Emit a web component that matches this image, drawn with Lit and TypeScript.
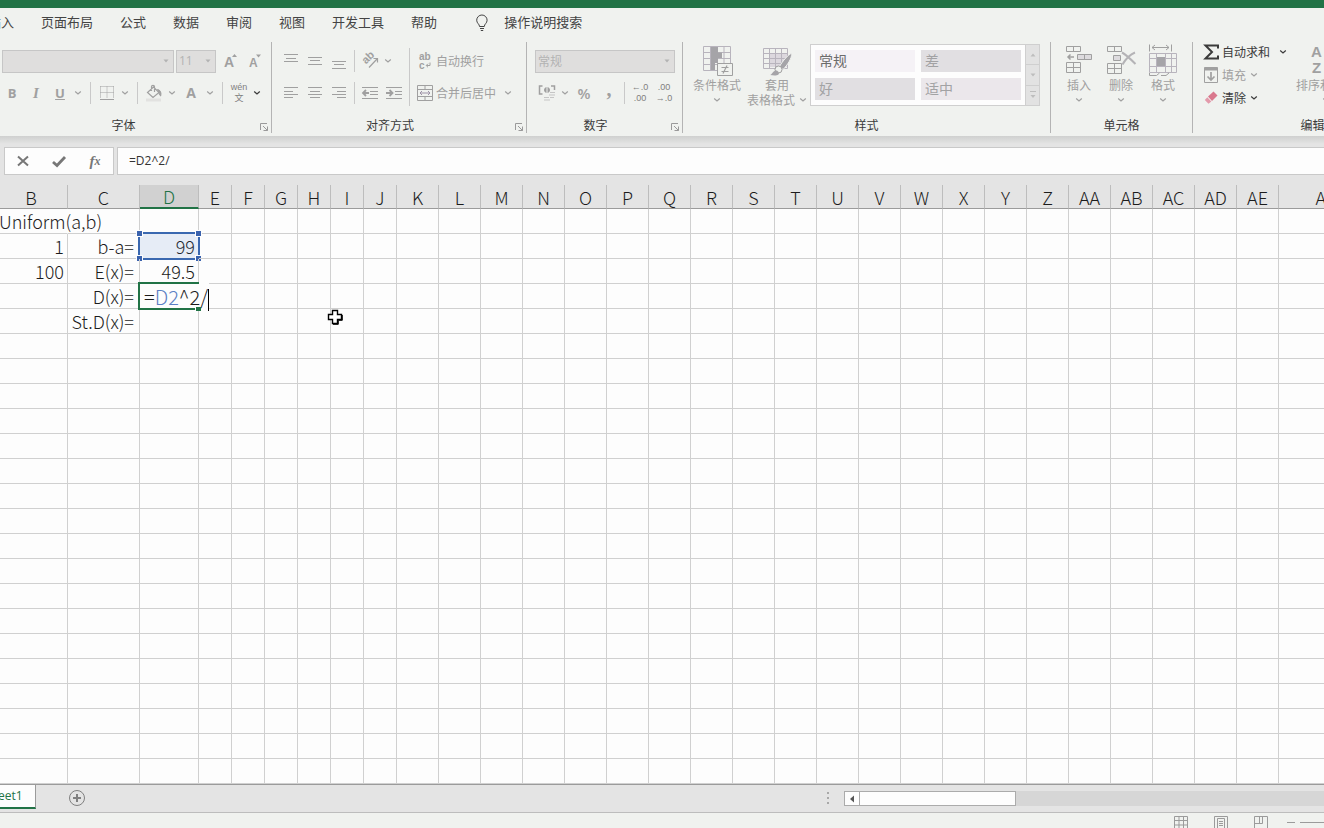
import { LitElement, html, svg, css, nothing } from "lit";
import { customElement, state } from "lit/decorators.js";
import { classMap } from "lit/directives/class-map.js";
import { styleMap } from "lit/directives/style-map.js";

const icon = (w: number, h: number, body: unknown) =>
  html`<svg width=${w} height=${h} viewBox="0 0 ${w} ${h}" fill="none" stroke="currentColor" aria-hidden="true">${body}</svg>`;

const chevron = () => icon(8, 6, svg`<path d="M1.2 1.5 4 4 6.800 1.500" stroke-width="1.200"/>`);
const arrow = () => icon(6, 4, svg`<path d="M0.500 0.500H5.500L3 3.500Z" fill="currentColor" stroke="none"/>`);

const lines = (rows: [number, number, number][]) =>
  icon(16, 18, rows.map(([x, y, w]) => svg`<path d="M${x} ${y}.5h${w}"/>`));

const ICONS = {
  bulb: icon(16, 18, svg`<path d="M5.500 12.500C5.500 10 2.700 9.300 2.700 6.200a5.200 5.200 0 0 1 10.400 0C13.100 9.300 10.300 10 10.300 12.500ZM6 14.500h4M6.800 16.500h2.400"/>`),
  growFont: icon(16, 16, svg`<text class="letter" x="2" y="14" font-size="14">A</text><path d="M10 4 12.500 1 15 4Z" fill="currentColor" stroke="none"/>`),
  shrinkFont: icon(16, 16, svg`<text class="letter" x="3" y="14" font-size="12">A</text><path d="M10 1.500h5L12.500 4.500Z" fill="currentColor" stroke="none"/>`),
  borders: icon(16, 16, svg`<path d="M1.500 1.500h13M1.500 1.500v12M14.500 1.500v12M8 1.500v12M1.500 7.500h13" stroke-dasharray="1 1"/><path d="M1 14.500h14"/>`),
  bucket: icon(18, 18, svg`<path d="M2.500 8.500 8.500 3 14 8.500 8 13.500ZM6.500 7V2.800a1.500 1.500 0 0 1 3 0V8" stroke-width="1.200"/><path d="M12.500 5.500c3 .5 4 3 3.200 6.500-1.500-1-1.700-2.500-1.400-3.500Z" fill="currentColor"/><path d="M1 16h15" stroke="#e2e2e0" stroke-width="3"/>`),
  top: lines([[1, 2, 14], [3, 6, 10], [1, 9, 14]]),
  middle: lines([[1, 5, 14], [3, 8, 10], [1, 12, 14]]),
  bottom: lines([[1, 9, 14], [3, 12, 10], [1, 16, 14]]),
  left: lines([[1, 3, 14], [1, 7, 9], [1, 10, 14], [1, 13, 9]]),
  center: lines([[1, 3, 14], [3, 7, 10], [1, 10, 14], [3, 13, 10]]),
  right: lines([[1, 3, 14], [6, 7, 9], [1, 10, 14], [6, 13, 9]]),
  orientation: icon(18, 18, svg`<text class="letter" x="0" y="0" font-size="11" transform="translate(5 12.500) rotate(-45)">ab</text><path d="M8 15.500 16 7M12.500 6.500h4v4" stroke-width="1.200"/>`),
  outdent: icon(18, 16, svg`<path d="M1 2.500h16M9 6.500h8M9 9.500h8M1 13.500h16"/><path d="M8 8H2.500M5 5 2 8l3 3" stroke-width="1.800"/>`),
  indent: icon(18, 16, svg`<path d="M1 2.500h16M10 6.500h7M10 9.500h7M1 13.500h16"/><path d="M1 8H7M4.500 5l3 3-3 3" stroke-width="1.800"/>`),
  wrap: icon(16, 18, svg`<text class="letter" x="2" y="8" font-size="10">ab</text><text class="letter" x="2" y="17" font-size="10">c</text><path d="M13 10.500v3H9.500M11 11.700 9.200 13.500 11 15.300"/>`),
  merge: icon(16, 16, svg`<path d="M.5.5h15v15H.5ZM.5 4.500h15M.5 11.500h15M8 .5v4M8 11.500v4"/><path d="M3 8h10M5 6 3 8l2 2M11 6l2 2-2 2" stroke="#9d92a6"/>`),
  currency: icon(18, 18, svg`<path d="M4.500 2H1.500v8h3M13 2h3.500v4" stroke-width="1.500"/><circle cx="9" cy="6" r="2.500" fill="currentColor"/><path d="M9 3v6" stroke="#f0f2ef"/><path d="M12 8.500h5M11 11h6M6 13.500h5M12 13.500h4M6 16h6" stroke="#c5c5c5"/>`),
  conditional: icon(32, 32, svg`<path d="M2.500 2.500h27v24h-27ZM2.500 8.500h27M2.500 14.500h27M2.500 20.500h27M9.500 2.500v24M16.500 2.500v24M23 2.500v24" stroke="#b8b4bd"/><path d="M10 3h7v5.500h4V14h-4v5h-3v7h-4Z" fill="#a5a4a8" stroke="none"/><path d="M16.500 19.500h15v12h-15Z" fill="#f0f2ef"/><path d="M20.500 23.500h7M20.500 27.500h7M26 21.500l-4 8" stroke-width="1.200"/>`),
  tableFormat: icon(32, 32, svg`<path d="M8 10h18v13H8Z" fill="#dcd8de" stroke="none"/><path d="M2.500 4.500h24v20h-24ZM2.500 9.500h24M2.500 14.500h24M2.500 19.500h24M8.500 4.500v20M14.500 4.500v20M20.500 4.500v20" stroke="#b8b4bd"/><path d="M31 9c-5 2.500-10 9-12.500 13.500l3.500 3c4.500-4.500 8.500-10.500 9-16.500Z" fill="#a5a4a8" stroke="#f0f2ef"/><circle cx="17.500" cy="25.500" r="3.500" fill="#f0f2ef"/><path d="M9 31c2.500-.5 3-4.500 6-4.500 1.500 0 4 2 2.500 4-2 1.500-5.500 1-8.500.5Z" fill="#a5a4a8" stroke="none"/>`),
  insert: icon(32, 32, svg`<path d="M3.500 2.500h14v5h-14ZM10.500 2.500v5M3.500 18.500h14v10h-14ZM10.500 18.500v10M3.500 23.500h14"/><path d="M14.500 10.500h14v5h-14ZM21.500 10.500v5" fill="#dddbde"/><path d="M11 13H5M7.500 10.500 5 13l2.500 2.500" stroke-width="1.500"/>`),
  remove: icon(32, 32, svg`<path d="M2.500 2.500h14v5h-14ZM9.500 2.500v5M2.500 19.500h14v10h-14ZM9.500 19.500v10M2.500 24.500h14"/><path d="M8.500 11.500h7v5h-7Z" fill="#dddbde"/><path d="M17 8.500c4 2 9 7 13.500 11.500M30 8.500c-5 2-9 6-12.500 12" stroke-width="2" stroke="#b4b3b6"/>`),
  format: icon(32, 32, svg`<path d="M2.500.5v7M24.500.5v7M5 3.500h17M8 1 5 3.500 8 6M19 1l3 2.500L19 6"/><path d="M2.500 9.500h27v19h-27ZM2.500 14.500h27M2.500 22.500h27M9.500 9.500v19M18.500 9.500v19M24.500 9.500v19" stroke="#b8b4bd"/><path d="M10 13h8v9h-8Z" fill="#a5a4a8" stroke="none"/><path d="M2.500 29v2.500h7l3-2.500M14 31.500h5l3-2.500"/>`),
  sigma: icon(16, 16, svg`<path d="M15 4.500V1.500H2.500L9 8l-6.500 6.500H15V11.500" stroke-width="2"/>`),
  fill: icon(16, 16, svg`<path d="M1.500.5h13v15h-13Z"/><path d="M1.500 2h13" stroke-width="3"/><path d="M8 5v8M4.500 9.500 8 13l3.500-3.500" stroke-width="1.700"/>`),
  eraser: icon(16, 16, svg`<g stroke="none"><path d="M5 6.500 10.500 1.500 14.500 5.500 9 11Z" fill="#d9788d"/><path d="M4.300 7.200 8.300 11.500 5.500 13.700 1.800 10Z" fill="#e39aab"/></g>`),
  sort: icon(32, 32, svg`<text class="letter" x="1" y="13" font-size="15">A</text><text class="letter" x="2" y="29" font-size="15">Z</text><path d="M14 9.500h6M16 15h10l-4 5v8" stroke-width="2"/>`),
  cancel: icon(16, 16, svg`<path d="M3 3.500 13 12.500M13 3.500 3 12.500" stroke-width="2"/>`),
  enter: icon(16, 16, svg`<path d="M2 9 6 12.500 14 4" stroke-width="2.800"/>`),
  launcher: icon(10, 10, svg`<path d="M1.500 8V1.500H8M4 4l4.500 4.500M8.500 4.500v4h-4"/>`),
  plus: icon(18, 18, svg`<circle cx="9" cy="9" r="7.500"/><path d="M9 5v8M5 9h8" stroke-width="2"/>`),
  normalView: icon(14, 14, svg`<path d="M.5.5h13v13H.5ZM5 .5v13M9.500.5v13M.5 4.500h13M.5 9h13"/>`),
  pageLayout: icon(14, 14, svg`<path d="M.5.5h13v13H.5ZM3.500 2.500h7v10h-7ZM5 5.500h4M5 7.500h4M5 9.500h4"/>`),
  pageBreak: icon(14, 14, svg`<path d="M.5 14V.5h13V14M.5 7.500h8V.5M5.500.5v7"/>`),
};

type Cell = { text: string; kind?: "spill" | "label" | "reference" | "editing" };

@customElement("sheet-grid")
class SheetGrid extends LitElement {
  static columns: [string, number][] = [
    ["B", 73], ["C", 72], ["D", 59],
    ..."EFGHIJ".split("").map((c) => [c, 33] as [string, number]),
    ..."KLMNOPQRSTUVWXYZ".split("").map((c) => [c, 42] as [string, number]),
    ..."ABCDE".split("").map((c) => ["A" + c, 42] as [string, number]),
    ["AF", 94],
  ];

  static rowCount = 40;

  @state() cells: Record<string, Cell> = {
    B1: { text: "Uniform(a,b)", kind: "spill" },
    B2: { text: "1" },
    C2: { text: "b-a=", kind: "label" },
    D2: { text: "99", kind: "reference" },
    B3: { text: "100" },
    C3: { text: "E(x)=", kind: "label" },
    D3: { text: "49.5" },
    C4: { text: "D(x)=", kind: "label" },
    D4: { text: "", kind: "editing" },
    C5: { text: "St.D(x)=", kind: "label" },
  };

  static styles = css`
    :host { display: block; flex: 1; min-height: 0; overflow: hidden; background: #fdfdfd; position: relative; }
    table { border-collapse: separate; border-spacing: 0; table-layout: fixed; width: 0; margin-left: -5px;
      font: 18px/24px "Noto Sans CJK SC", sans-serif; font-weight: 300; color: #1c1c1c; }
    th { height: 22px; padding: 1px 0 0; line-height: 22px; font-weight: 300; background: #e4e4e4;
      border-right: 1px solid #bdbdbd; border-bottom: 1px solid #9b9b9b; }
    th.active { background: #d1d1d1; color: #217346; border-bottom: 2px solid #217346; height: 21px; line-height: 21px; }
    td { height: 24px; padding: 0 3px 0 0; text-align: right; white-space: nowrap; position: relative;
      border-right: 1px solid #d0d0d0; border-bottom: 1px solid #d0d0d0; }
    td.label { padding-right: 5px; }
    td.spill { text-align: left; padding: 0 0 0 4px; border-right-color: transparent; }
    .outline { position: absolute; inset: -2px; border: 2px solid #3a68b0; background: #4472c41f; }
    .handle { position: absolute; width: 5px; height: 5px; background: #3a62ad; border: 1px solid #fdfdfd; }
    .tl { left: -4px; top: -4px; }
    .tr { right: -4px; top: -4px; }
    .bl { left: -4px; bottom: -4px; }
    .br { right: -4px; bottom: -4px; }
    .editor { position: absolute; left: -2px; top: -2px; height: 24px; padding: 2px 0 2px 4px; font-size: 20px; line-height: 25px;
      background: linear-gradient(#217346, #217346) 0 0 / 59px 2px no-repeat,
        linear-gradient(#217346, #217346) 0 100% / 55px 2px no-repeat, #fdfdfd;
      border-left: 2px solid #217346; outline: none; z-index: 1; }
    .caret { display: inline-block; width: 1px; height: 22px; background: #000; vertical-align: middle; }
    .ref { color: #5b7fc4; }
    .fill-handle { position: absolute; right: -3px; bottom: -3px; width: 5px; height: 4px; background: #217346; z-index: 2; }
    .pointer { position: absolute; left: 327px; top: 124px; }
  `;

  cell(key: string) {
    const c = this.cells[key];
    if (!c) return html`<td></td>`;
    if (c.kind === "reference")
      return html`<td>${c.text}<span class="outline"><i class="handle tl"></i><i class="handle tr"></i><i class="handle bl"></i><i class="handle br"></i></span></td>`;
    if (c.kind === "editing")
      return html`<td><div class="editor" role="textbox" aria-label="D4" contenteditable="true">=<span class="ref">D2</span>^2/<span class="caret"></span></div><i class="fill-handle"></i></td>`;
    return html`<td class=${classMap({ spill: c.kind === "spill", label: c.kind === "label" })}>${c.text}</td>`;
  }

  render() {
    const rows = Array.from({ length: SheetGrid.rowCount }, (_, i) => i + 1);
    return html`
      <table>
        <colgroup>${SheetGrid.columns.map(([, w]) => html`<col style=${styleMap({ width: w + "px" })}>`)}</colgroup>
        <thead><tr>${SheetGrid.columns.map(([n]) => html`<th scope="col" class=${classMap({ active: n === "D" })}>${n}</th>`)}</tr></thead>
        <tbody>${rows.map((r) => html`<tr>${SheetGrid.columns.map(([n]) => this.cell(n + r))}</tr>`)}</tbody>
      </table>
      <svg class="pointer" width="17" height="17" viewBox="0 0 17 17" aria-hidden="true">
        <path d="M5.500 1.500h5v4h4v5h-4v4h-5v-4H1.500v-5h4Z" fill="#fff" stroke="#000" stroke-width="1.400"/>
        <path d="M6 15.300h5.300v-4h4V6" fill="none" stroke="#000"/>
      </svg>`;
  }
}

@customElement("app-root")
class AppRoot extends LitElement {
  @state() formula = "=D2^2/";

  static styles = css`
    :host { display: flex; flex-direction: column; height: 100vh; overflow: hidden; background: #e4e4e4;
      font: 12px/16px "Noto Sans CJK SC", sans-serif; color: #3b3b3b; }
    * { box-sizing: border-box; }
    button, select, input { font: inherit; color: inherit; background: none; border: 0; padding: 0; margin: 0; border-radius: 0; white-space: nowrap; }
    svg { display: block; flex: none; overflow: visible; }
    .letter { font-family: "Liberation Sans", sans-serif; font-weight: bold; fill: currentColor; stroke: none; }
    .title { height: 8px; flex: none; background: #217346; }
    .tabs { display: flex; flex: none; height: 30px; padding-bottom: 2px; gap: 27px; margin-left: -12px; align-items: center; font-size: 13px; color: #444; }
    .tabs button { flex: none; }
    .tabs .tell { display: flex; align-items: center; gap: 14px; margin-left: 10px; }
    .tell svg { margin-top: 2px; }
    .top { flex: none; background: #f0f2ef; overflow: hidden; }
    .ribbon { display: flex; height: 98px; padding: 4px 0 2px; margin-left: -6px; }
    .group { display: flex; flex: none; flex-direction: column; border-right: 1px solid #b4b4b4; margin-bottom: 1px; color: #a0a0a0; }
    .g-font { width: 278px; padding-left: 6px; }
    .g-align { width: 255px; padding-left: 7px; }
    .g-number { width: 156px; padding-left: 8px; }
    .g-styles { width: 368px; padding-left: 4px; }
    .g-cells { width: 142px; padding-left: 7px; }
    .g-edit { width: 240px; padding-left: 10px; }
    .body { display: flex; flex: 1; }
    .rows { display: flex; flex-direction: column; }
    .row { display: flex; align-items: center; height: 26px; }
    .row.first { height: 38px; }
    .row.inset { padding-left: 2px; }
    .caption { display: flex; height: 16px; align-items: center; color: #3b3b3b; }
    .g-font .caption { margin-left: -6px; }
    .g-align .caption { margin-left: -7px; }
    .g-number .caption { margin-left: -8px; }
    .g-styles .caption { margin-left: -4px; }
    .g-cells .caption { margin-left: -7px; }
    .g-edit .caption { margin-left: -10px; }
    .caption span { flex: 1; text-align: center; }
    .caption button { width: 18px; height: 14px; padding: 4px 0 0 6px; color: #9a9a9a; }
    .btn { display: flex; flex: none; width: 24px; height: 24px; align-items: center; justify-content: center; }
    .btn.wide { width: 26px; }
    .btn.chev { width: 12px; }
    .dark { color: #3b3b3b; }
    .glyph { font: bold 13px/16px "Open Sans", sans-serif; }
    .glyph.i { font-style: italic; font-family: "Liberation Serif", serif; font-size: 15px; }
    .glyph.u { text-decoration: underline; }
    .glyph.a { font-size: 14px; }
    .glyph.pct { font: 600 15px/16px "Open Sans", sans-serif; }
    .glyph.comma { font: bold 20px/8px "Liberation Serif", serif; padding-bottom: 8px; }
    .two { flex-direction: column; font: 9px/11px "Liberation Sans", "Noto Sans CJK SC", sans-serif; color: #808080; }
    .sep { width: 1px; height: 22px; background: #c9c9c9; margin: 0 3px; }
    .sep.loose { margin: 0 4px 0 6px; }
    .sep.tall { height: 58px; margin-top: 6px; }
    .pick { display: grid; align-items: center; width: 140px; height: 23px; background: #dfdedd; border: 1px solid #c6c6c6; color: #b3b3b3; }
    .pick > * { grid-area: 1 / 1; }
    .pick svg { justify-self: end; margin-right: 4px; }
    .pick select { appearance: none; width: 100%; padding-left: 2px; opacity: 1; font-size: 12px; }
    .pick.font { width: 172px; margin-right: 2px; }
    .pick.size { width: 40px; margin-right: 2px; }
    .pick.size select { font-family: "Open Sans", sans-serif; font-size: 12px; }
    .text { display: flex; align-items: center; height: 24px; }
    .text > span { display: flex; justify-content: center; width: 23px; }
    .big { display: flex; flex: none; flex-direction: column; align-items: center; width: 60px; }
    .big .pic { height: 34px; padding-top: 2px; margin-bottom: 1px; }
    .big span { line-height: 15px; }
    .big .more { display: flex; align-items: center; gap: 4px; height: 15px; }
    .g-cells .big { width: 42px; }
    .g-edit .big { width: 66px; }
    .gallery { display: flex; align-self: flex-start; margin: 2px 0 0 3px; background: #fdfdfd; border: 1px solid #cfcfcf; height: 62px; width: 230px; }
    .swatches { display: grid; grid-template-columns: 100px 100px; grid-auto-rows: 22px; gap: 6px; padding: 5px 4px; flex: 1; }
    .swatch { font-size: 14px; line-height: 20px; text-align: left; padding: 0 0 2px 4px; color: #a2a2a4; background: #e1dfe2; }
    .swatch.normal { background: #f5f2f6; color: #6c6c6c; }
    .swatch.neutral { background: #ebe7eb; }
    .scroll { display: flex; flex-direction: column; width: 14px; background: #e2e2e2; border-left: 1px solid #cfcfcf; }
    .scroll button { display: flex; flex: 1; align-items: center; justify-content: center; color: #bdbdbd; }
    .scroll button + button { border-top: 1px solid #cfcfcf; }
    .up svg { transform: rotate(180deg); }
    .commands { display: flex; flex-direction: column; width: 90px; margin-top: -2px; }
    .command { display: flex; align-items: center; height: 23px; }
    .command .label { margin: 0 4px 0 3px; }
    .command.sum .label { margin-right: 9px; }
    .formula { display: flex; flex: none; gap: 3px; height: 49px; padding: 11px 0 10px 4px;
      background: linear-gradient(#cfd0cf, #e4e4e4 8px); }
    .actions { display: flex; flex: none; width: 110px; background: #fdfdfd; border: 1px solid #c9c9c9; align-items: center; color: #777; }
    .actions button { display: flex; flex: 1; justify-content: center; }
    .fx { font: italic bold 15px/18px "Liberation Serif", serif; }
    .fx small { font-size: 12px; }
    .entry { flex: 1; min-width: 0; background: #fdfdfd; border: 1px solid #c9c9c9; border-right: 0; padding: 0 0 0 11px; font: 12px/16px "Open Sans", sans-serif; color: #333; outline: none; }
    .sheetbar { display: flex; flex: none; height: 29px; border-top: 1px solid #9b9b9b; border-bottom: 1px solid #bdbdbd; }
    .sheet { width: 58px; margin-left: -22px; height: 24px; background: #fdfdfd; color: #217346; border-right: 1px solid #9b9b9b; border-bottom: 2px solid #217346; font: 12px/22px "Open Sans", sans-serif; text-align: left; padding-left: 6px; }
    .add { display: flex; color: #808080; margin: 4px 0 0 32px; align-self: flex-start; }
    .spacer { flex: 1; }
    .grip { color: #a8a8a8; margin: 7px 14px 0 0; }
    .hscroll { display: flex; flex: 0 0 480px; height: 15px; margin-top: 6px; background: #d6d6d6; }
    .hscroll button { display: flex; align-items: center; justify-content: center; width: 16px; background: #fdfdfd; border: 1px solid #ababab; color: #555; }
    .thumb { width: 156px; background: #fdfdfd; border: 1px solid #ababab; border-left: 0; }
    .status { display: flex; flex: none; height: 15px; justify-content: flex-end; align-items: flex-start; gap: 26px; padding-top: 3px; overflow: hidden; background: #f0f2ef; color: #9b9b9b; }
    .status button { flex: none; }
    .zoom { margin-left: -7px; }
  `;

  btn(label: string, content: unknown, cls = "") {
    return html`<button class="btn ${cls}" aria-label=${label} title=${label}>${content}</button>`;
  }

  drop(label: string, cls = "") {
    return this.btn(label, chevron(), "chev " + cls);
  }

  caption(text: string, launcher = true) {
    return html`<div class="caption"><span>${text}</span>${launcher ? html`<button aria-label="${text}设置">${ICONS.launcher}</button>` : nothing}</div>`;
  }

  pick(label: string, value: string, cls = "") {
    return html`<label class="pick ${cls}"><select aria-label=${label} disabled><option>${value}</option></select>${arrow()}</label>`;
  }

  big(pic: unknown, label: string, second = "") {
    return html`<button class="big"><span class="pic">${pic}</span><span>${label}</span><span class="more">${second}${chevron()}</span></button>`;
  }

  render() {
    return html`
      <div class="title"></div>
      <header class="top">
        <nav class="tabs">
          ${["插入", "页面布局", "公式", "数据", "审阅", "视图", "开发工具", "帮助"].map((t) => html`<button>${t}</button>`)}
          <button class="tell">${ICONS.bulb}操作说明搜索</button>
        </nav>
        <div class="ribbon">
          <section class="group g-font">
            <div class="body rows">
              <div class="row first inset">
                ${this.pick("字体", "", "font")}${this.pick("字号", "11", "size")}
                ${this.btn("增大字号", ICONS.growFont)}${this.btn("减小字号", ICONS.shrinkFont)}
              </div>
              <div class="row">
                ${this.btn("加粗", "B", "glyph")}${this.btn("倾斜", "I", "glyph i")}${this.btn("下划线", "U", "glyph u")}${this.drop("下划线样式")}
                <i class="sep loose"></i>${this.btn("边框", ICONS.borders)}${this.drop("边框样式")}
                <i class="sep loose"></i>${this.btn("填充颜色", ICONS.bucket)}${this.drop("选择填充颜色")}
                ${this.btn("字体颜色", "A", "wide glyph a")}${this.drop("选择字体颜色")}
                <i class="sep loose"></i>${this.btn("拼音", html`<span>wén</span><span>文</span>`, "two")}${this.drop("拼音选项", "dark")}
              </div>
            </div>
            ${this.caption("字体")}
          </section>
          <section class="group g-align">
            <div class="body">
              <div class="rows">
                <div class="row first">
                  ${this.btn("顶端对齐", ICONS.top)}${this.btn("垂直居中", ICONS.middle)}${this.btn("底端对齐", ICONS.bottom)}
                  <i class="sep"></i>${this.btn("方向", ICONS.orientation)}${this.drop("方向选项")}
                </div>
                <div class="row">
                  ${this.btn("左对齐", ICONS.left)}${this.btn("居中", ICONS.center)}${this.btn("右对齐", ICONS.right)}
                  <i class="sep"></i>${this.btn("减少缩进量", ICONS.outdent)}${this.btn("增加缩进量", ICONS.indent)}
                </div>
              </div>
              <i class="sep tall"></i>
              <div class="rows">
                <div class="row first"><button class="text"><span>${ICONS.wrap}</span>自动换行</button></div>
                <div class="row"><button class="text"><span>${ICONS.merge}</span>合并后居中</button><button class="btn" aria-label="合并选项">${chevron()}</button></div>
              </div>
            </div>
            ${this.caption("对齐方式")}
          </section>
          <section class="group g-number">
            <div class="body rows">
              <div class="row first">${this.pick("数字格式", "常规")}</div>
              <div class="row">
                ${this.btn("会计数字格式", ICONS.currency)}${this.drop("货币选项")}
                ${this.btn("百分比样式", "%", "wide glyph pct")}${this.btn("千位分隔样式", ",", "glyph comma")}
                <i class="sep"></i>
                ${this.btn("增加小数位数", html`<span>←.0</span><span>.00</span>`, "two")}
                ${this.btn("减少小数位数", html`<span>.00</span><span>→.0</span>`, "two")}
              </div>
            </div>
            ${this.caption("数字")}
          </section>
          <section class="group g-styles">
            <div class="body">
              ${this.big(ICONS.conditional, "条件格式")}
              ${this.big(ICONS.tableFormat, "套用", "表格格式")}
              <div class="gallery">
                <div class="swatches">
                  <button class="swatch normal">常规</button><button class="swatch">差</button>
                  <button class="swatch">好</button><button class="swatch neutral">适中</button>
                </div>
                <div class="scroll">
                  <button class="up" aria-label="上一行">${arrow()}</button>
                  <button aria-label="下一行">${arrow()}</button>
                  <button aria-label="其他">${icon(6, 8, svg`<path d="M0 .5h6"/><path d="M.5 4H5.500L3 7Z" fill="currentColor" stroke="none"/>`)}</button>
                </div>
              </div>
            </div>
            ${this.caption("样式", false)}
          </section>
          <section class="group g-cells">
            <div class="body">
              ${this.big(ICONS.insert, "插入")}${this.big(ICONS.remove, "删除")}${this.big(ICONS.format, "格式")}
            </div>
            ${this.caption("单元格", false)}
          </section>
          <section class="group g-edit">
            <div class="body">
              <div class="commands">
                <button class="command sum dark">${ICONS.sigma}<span class="label">自动求和</span>${chevron()}</button>
                <button class="command">${ICONS.fill}<span class="label">填充</span>${chevron()}</button>
                <button class="command dark">${ICONS.eraser}<span class="label">清除</span>${chevron()}</button>
              </div>
              ${this.big(ICONS.sort, "排序和筛选")}
            </div>
            ${this.caption("编辑", false)}
          </section>
        </div>
      </header>
      <div class="formula">
        <div class="actions">
          <button aria-label="取消">${ICONS.cancel}</button>
          <button aria-label="输入">${ICONS.enter}</button>
          <button class="fx" aria-label="插入函数">f<small>x</small></button>
        </div>
        <input class="entry" aria-label="编辑栏" .value=${this.formula} @input=${(e: InputEvent) => (this.formula = (e.target as HTMLInputElement).value)}>
      </div>
      <sheet-grid></sheet-grid>
      <footer class="sheetbar">
        <button class="sheet">Sheet1</button>
        <button class="add" aria-label="新工作表">${ICONS.plus}</button>
        <span class="spacer"></span>
        <span class="grip">${icon(4, 12, svg`<path d="M1 1h2M1 6h2M1 11h2" stroke-width="2"/>`)}</span>
        <div class="hscroll">
          <button aria-label="向左滚动">${icon(6, 8, svg`<path d="M5 .5v7L1 4Z" fill="currentColor" stroke="none"/>`)}</button>
          <div class="thumb"></div>
        </div>
      </footer>
      <footer class="status">
        <button aria-label="普通">${ICONS.normalView}</button>
        <button aria-label="页面布局">${ICONS.pageLayout}</button>
        <button aria-label="分页预览">${ICONS.pageBreak}</button>
        <button class="zoom" aria-label="缩放">${icon(37, 14, svg`<path d="M0 6.500h8M13 6.500h24"/>`)}</button>
      </footer>`;
  }
}
